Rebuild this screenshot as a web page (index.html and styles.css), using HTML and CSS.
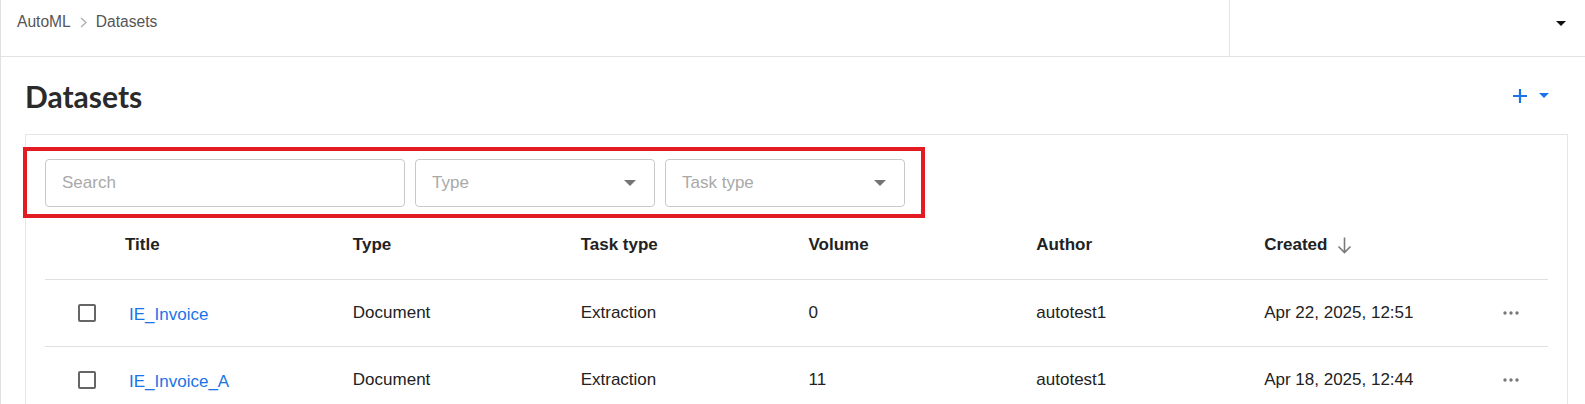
FILE: index.html
```html
<!DOCTYPE html>
<html lang="en">
<head>
<meta charset="utf-8">
<title>Datasets</title>
<link rel="stylesheet" href="styles.css">
</head>
<body>
<div class="app">
  <header class="topbar">
    <nav class="breadcrumb">
      <span class="crumb">AutoML</span>
      <svg class="crumb-sep" width="7" height="11" viewBox="0 0 7 11"><polyline points="1,1 6,5.5 1,10" fill="none" stroke="#b0b0b0" stroke-width="1.4"/></svg>
      <span class="crumb">Datasets</span>
    </nav>
    <div class="account">
      <svg class="account-caret" width="10" height="5" viewBox="0 0 10 5"><polygon points="0,0 10,0 5,5" fill="#111"/></svg>
    </div>
  </header>

  <main class="page">
    <div class="page-head">
      <h1 class="page-title">Datasets</h1>
      <button class="add-btn" type="button">
        <svg width="14" height="14" viewBox="0 0 14 14"><path d="M7 0v14M0 7h14" stroke="#1a73e8" stroke-width="2.2" fill="none"/></svg>
        <svg width="10" height="5" viewBox="0 0 10 5"><polygon points="0,0 10,0 5,5" fill="#1a73e8"/></svg>
      </button>
    </div>

    <section class="card">
      <div class="filters">
        <div class="field field-search"><span class="placeholder">Search</span></div>
        <div class="field field-select"><span class="placeholder">Type</span><svg class="select-caret" width="12" height="6" viewBox="0 0 12 6"><polygon points="0,0 12,0 6,6" fill="#757575"/></svg></div>
        <div class="field field-select"><span class="placeholder">Task type</span><svg class="select-caret" width="12" height="6" viewBox="0 0 12 6"><polygon points="0,0 12,0 6,6" fill="#757575"/></svg></div>
      </div>

      <div class="table">
        <div class="row row-head">
          <div class="cell"></div>
          <div class="cell">Title</div>
          <div class="cell">Type</div>
          <div class="cell">Task type</div>
          <div class="cell">Volume</div>
          <div class="cell">Author</div>
          <div class="cell cell-sort">Created
            <svg class="sort-icon" width="15" height="17" viewBox="0 0 15 17"><path d="M7.5 0.5v15M1.5 9.5l6 6 6-6" fill="none" stroke="#7a7a7a" stroke-width="1.6"/></svg>
          </div>
          <div class="cell"></div>
        </div>

        <div class="row">
          <div class="cell cell-check"><span class="checkbox"></span></div>
          <div class="cell"><a class="link" href="#">IE_Invoice</a></div>
          <div class="cell">Document</div>
          <div class="cell">Extraction</div>
          <div class="cell">0</div>
          <div class="cell">autotest1</div>
          <div class="cell">Apr 22, 2025, 12:51</div>
          <div class="cell cell-actions"><svg width="16" height="4" viewBox="0 0 16 4"><circle cx="2" cy="2" r="1.7" fill="#777"/><circle cx="8" cy="2" r="1.7" fill="#777"/><circle cx="14" cy="2" r="1.7" fill="#777"/></svg></div>
        </div>

        <div class="row">
          <div class="cell cell-check"><span class="checkbox"></span></div>
          <div class="cell"><a class="link" href="#">IE_Invoice_A</a></div>
          <div class="cell">Document</div>
          <div class="cell">Extraction</div>
          <div class="cell">11</div>
          <div class="cell">autotest1</div>
          <div class="cell">Apr 18, 2025, 12:44</div>
          <div class="cell cell-actions"><svg width="16" height="4" viewBox="0 0 16 4"><circle cx="2" cy="2" r="1.7" fill="#777"/><circle cx="8" cy="2" r="1.7" fill="#777"/><circle cx="14" cy="2" r="1.7" fill="#777"/></svg></div>
        </div>
      </div>
    </section>
  </main>
</div>
</body>
</html>
```

FILE: styles.css
```css
* { box-sizing: border-box; }

html, body {
  margin: 0;
  background: #fff;
}

body {
  font-family: "Liberation Sans", Arial, sans-serif;
  color: #222;
}

.app {
  border-left: 1px solid #e0e0e0;
  min-height: 404px;
}

/* top bar with breadcrumb and account menu */
.topbar {
  display: flex;
  height: 57px;
  border-bottom: 1px solid #e3e3e3;
}

.breadcrumb {
  flex: 1;
  display: flex;
  align-items: center;
  gap: 9px;
  height: 18px;
  margin-top: 13px;
  padding-left: 16px;
  font-size: 15.6px;
  color: #555;
}

.crumb-sep { margin-top: 1px; }

.account {
  width: 356px;
  border-left: 1px solid #e3e3e3;
  display: flex;
  justify-content: flex-end;
  padding: 21px 19px 0 0;
}

.account-caret { display: block; }

/* page body */
.page {
  padding: 0 17px 0 24px;
}

.page-head {
  display: flex;
  align-items: center;
  justify-content: space-between;
  height: 77px;
}

.page-title {
  margin: 0;
  font-family: Lato, "Liberation Sans", sans-serif;
  font-weight: 700;
  font-size: 30px;
  color: #2a2a2a;
}

.add-btn {
  display: flex;
  align-items: center;
  gap: 12px;
  margin-right: 19px;
  padding: 0;
  border: 0;
  background: none;
}

.add-btn svg { display: block; }

.card {
  border: 1px solid #e6e6e6;
  border-bottom: 0;
  padding: 24px 19px 0;
  min-height: 280px;
}

/* filter bar */
.filters {
  position: relative;
  display: flex;
  gap: 10px;
  width: 860px;
}

.filters::after {
  content: "";
  position: absolute;
  top: -12px;
  bottom: -11px;
  left: -22px;
  right: -20px;
  border: 4px solid #e31b23;
  pointer-events: none;
}

.field {
  height: 48px;
  border: 1px solid #c9c9c9;
  border-radius: 4px;
  display: flex;
  align-items: center;
  padding: 0 18px 0 16px;
  font-size: 17px;
}

.field-search { width: 360px; }

.field-select {
  width: 240px;
  justify-content: space-between;
}

.placeholder { color: #a9a9a9; }

.select-caret { display: block; }

/* table */
.table {
  margin-top: 4px;
  font-size: 17px;
}

.row {
  display: grid;
  grid-template-columns: 80px repeat(6, 1fr) 56px;
  align-items: center;
  height: 67px;
  border-bottom: 1px solid #e0e0e0;
}

.row-head {
  height: 69px;
  font-weight: 700;
  color: #222;
}

.cell {
  display: flex;
  align-items: center;
}

.cell-sort { gap: 10px; }

.sort-icon { display: block; }

.cell-check { padding-left: 33px; }

.checkbox {
  width: 18px;
  height: 18px;
  border: 2px solid #666;
  border-radius: 2px;
}

.link {
  color: #1a73e8;
  text-decoration: none;
  padding-left: 4px;
  margin-top: 3px;
}

.cell-actions {
  padding-left: 11px;
}

.cell-actions svg { display: block; }
```
